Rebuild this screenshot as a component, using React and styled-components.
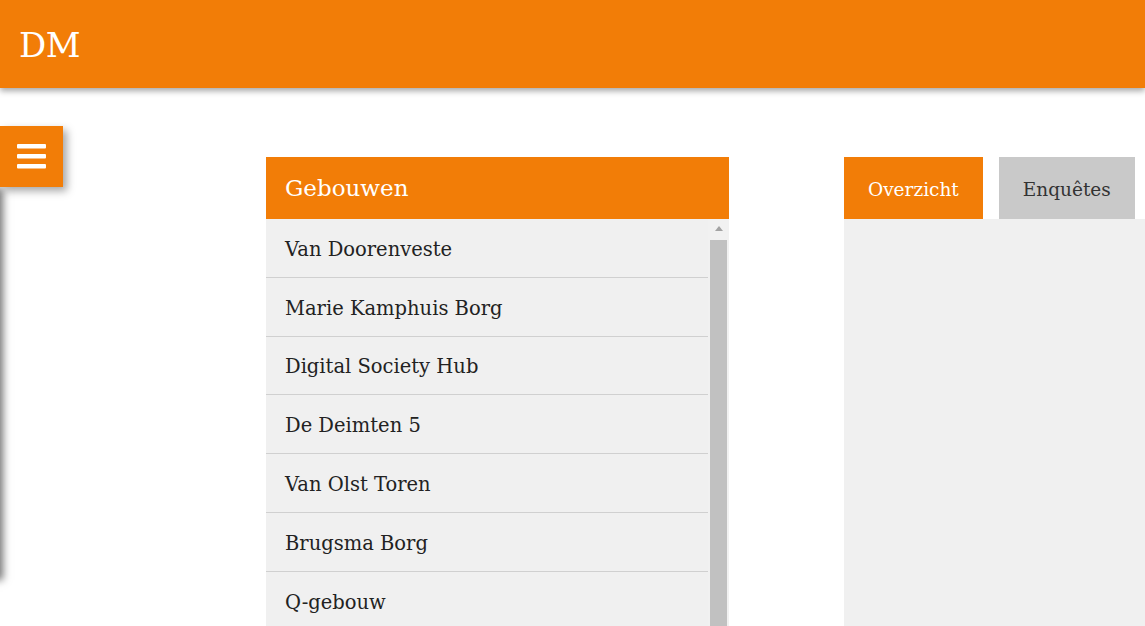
import React from 'react';
import styled, { createGlobalStyle } from 'styled-components';

const orange = '#f27d07';
const panelGrey = '#f0f0f0';

const GlobalStyle = createGlobalStyle`
  html, body {
    margin: 0;
    padding: 0;
    overflow: hidden;
    background: #fff;
    font-family: 'DejaVu Serif', 'Liberation Serif', serif;
  }
`;

const Page = styled.div`
  position: relative;
  width: 1145px;
  height: 626px;
  overflow: hidden;
`;

const Header = styled.header`
  position: relative;
  z-index: 3;
  height: 88px;
  display: flex;
  align-items: center;
  padding-left: 19px;
  background: ${orange};
  box-shadow: 0 3px 6px rgba(0, 0, 0, 0.35);
`;

const Brand = styled.h1`
  margin: 0;
  padding-top: 2px;
  font-size: 34px;
  font-weight: normal;
  color: #fff;
  letter-spacing: -0.5px;
`;

const MenuButton = styled.button`
  position: absolute;
  z-index: 2;
  top: 126px;
  left: 0;
  width: 63px;
  height: 61px;
  border: 0;
  padding: 0;
  display: flex;
  align-items: center;
  justify-content: center;
  background: ${orange};
  box-shadow: 4px 4px 8px rgba(0, 0, 0, 0.35);
  cursor: pointer;
`;

const Drawer = styled.aside`
  position: absolute;
  z-index: 1;
  top: 188px;
  left: -300px;
  width: 300px;
  height: 392px;
  background: #fff;
  box-shadow: 3px 0 8px rgba(0, 0, 0, 0.55);
`;

const Main = styled.main`
  display: flex;
  align-items: flex-start;
  gap: 115px;
  padding: 69px 0 0 266px;
`;

const BuildingsPanel = styled.section`
  width: 463px;
  flex-shrink: 0;
`;

const PanelHeader = styled.h2`
  margin: 0;
  height: 62px;
  display: flex;
  align-items: center;
  padding-left: 19px;
  background: ${orange};
  color: #fff;
  font-size: 23px;
  font-weight: normal;
`;

const PanelBody = styled.div`
  display: flex;
  height: 420px;
  background: ${panelGrey};
`;

const List = styled.ul`
  flex: 1;
  margin: 0;
  padding: 0;
  list-style: none;
`;

const Item = styled.li`
  box-sizing: border-box;
  height: 58.8px;
  display: flex;
  align-items: center;
  padding: 3px 0 0 19px;
  border-bottom: 1px solid #d0d0d0;
  font-size: 19.5px;
  color: #222;
`;

const ScrollTrack = styled.div`
  width: 21px;
  display: flex;
  flex-direction: column;
  align-items: center;
  background: #f1f1f1;
`;

const ScrollArrow = styled.div`
  height: 21px;
  display: flex;
  align-items: center;
  justify-content: center;
  &:before {
    content: '';
    border-left: 4.5px solid transparent;
    border-right: 4.5px solid transparent;
    border-bottom: 5px solid #a3a3a3;
    margin-top: -3px;
  }
`;

const ScrollThumb = styled.div`
  flex: 1;
  width: 17px;
  background: #c1c1c1;
`;

const DetailPanel = styled.section`
  flex: 1;
  min-width: 400px;
`;

const TabBar = styled.nav`
  display: flex;
  gap: 16px;
`;

const Tab = styled.button`
  height: 62px;
  padding: 2px 24px 0;
  border: 0;
  font-family: inherit;
  font-size: 18.5px;
  background: ${(p) => (p.active ? orange : '#c9c9c9')};
  color: ${(p) => (p.active ? '#fff' : '#333')};
  cursor: pointer;
`;

const TabContent = styled.div`
  height: 420px;
  background: ${panelGrey};
`;

const MenuIcon = () => (
  <svg width="29" height="25" viewBox="0 0 29 25" fill="#fff">
    <rect x="0" y="0" width="29" height="4.5" rx="1" />
    <rect x="0" y="10" width="29" height="4.5" rx="1" />
    <rect x="0" y="20" width="29" height="4.5" rx="1" />
  </svg>
);

const buildings = [
  'Van Doorenveste',
  'Marie Kamphuis Borg',
  'Digital Society Hub',
  'De Deimten 5',
  'Van Olst Toren',
  'Brugsma Borg',
  'Q-gebouw',
];

export default function App() {
  return (
    <Page>
      <GlobalStyle />
      <Header>
        <Brand>DM</Brand>
      </Header>
      <MenuButton aria-label="Menu">
        <MenuIcon />
      </MenuButton>
      <Drawer />
      <Main>
        <BuildingsPanel>
          <PanelHeader>Gebouwen</PanelHeader>
          <PanelBody>
            <List>
              {buildings.map((b) => (
                <Item key={b}>{b}</Item>
              ))}
            </List>
            <ScrollTrack>
              <ScrollArrow />
              <ScrollThumb />
            </ScrollTrack>
          </PanelBody>
        </BuildingsPanel>
        <DetailPanel>
          <TabBar>
            <Tab active>Overzicht</Tab>
            <Tab>Enquêtes</Tab>
          </TabBar>
          <TabContent />
        </DetailPanel>
      </Main>
    </Page>
  );
}
